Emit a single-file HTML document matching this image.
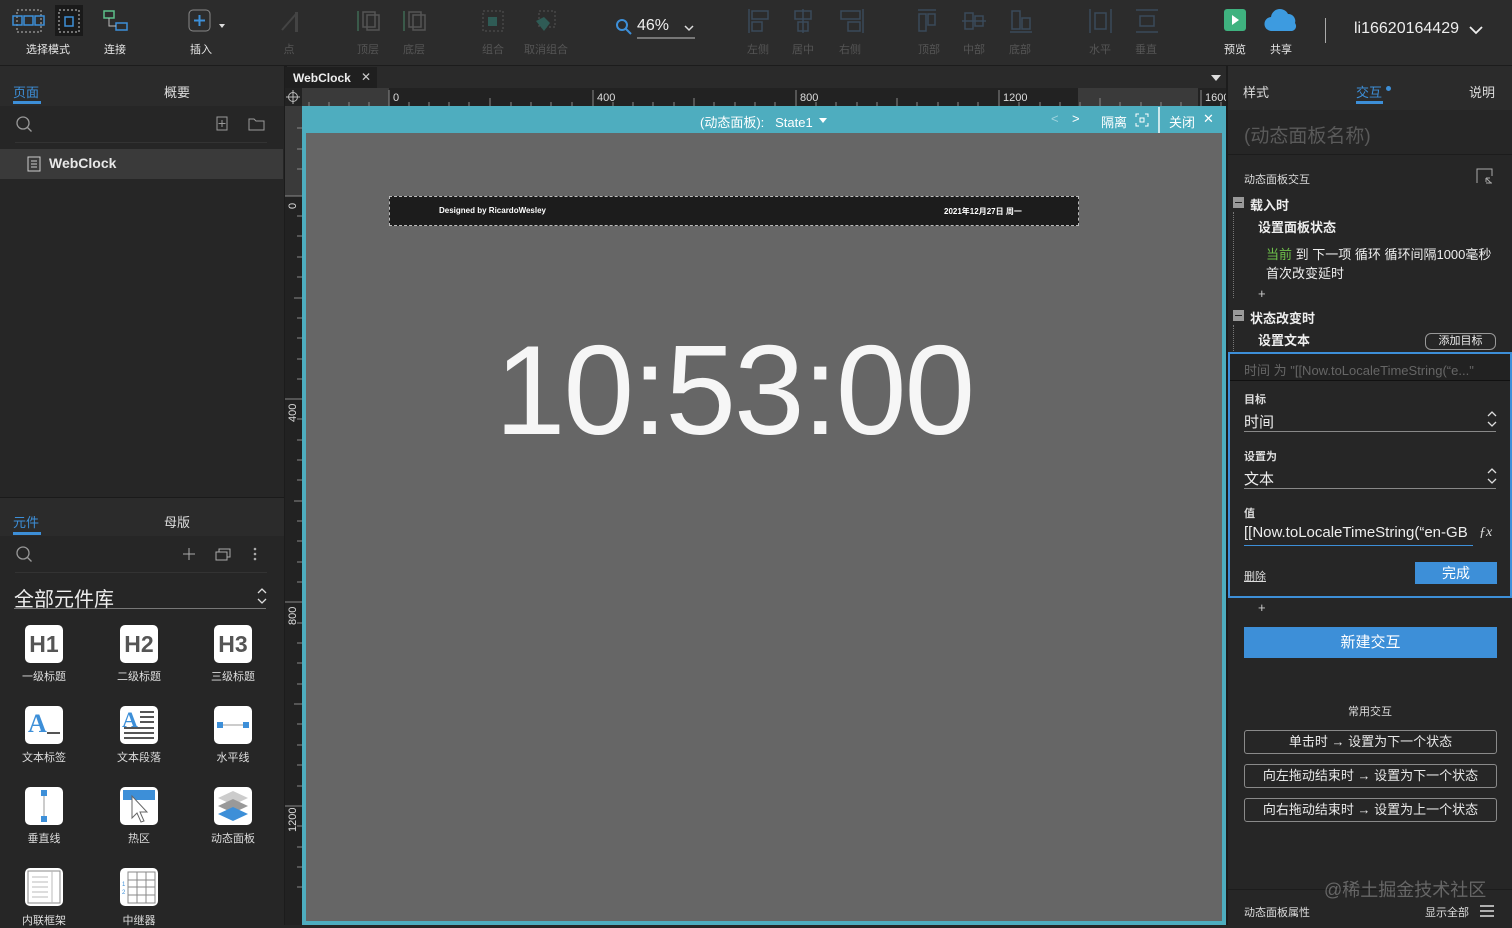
<!DOCTYPE html>
<html><head><meta charset="utf-8"><style>
*{margin:0;padding:0;box-sizing:border-box}
body{width:1512px;height:925px;background:#262626;font-family:"Liberation Sans","Noto Sans CJK SC",sans-serif;color:#ddd;position:relative;overflow:hidden;font-size:12px}
.a{position:absolute}
.tb{left:0;top:0;width:1512px;height:66px;background:#2c2c2c;border-bottom:1px solid #1c1c1c}
.tl{position:absolute;font-size:11px;color:#e6e6e6;text-align:center;width:60px}
.dim{color:#555}
.ic{position:absolute}
.tab{font-size:13px}
.blue{color:#3d8fd8}
.btn{position:absolute;left:1244px;width:253px;height:24px;border:1px solid #8a8a8a;border-radius:3px;font-size:13px;color:#e8e8e8;text-align:center;line-height:22px}
.comp{position:absolute;width:38px;height:38px;background:#fff;border-radius:5px;text-align:center}
.cl{position:absolute;font-size:11px;color:#ddd;width:90px;text-align:center}
</style></head><body>
<!-- toolbar -->
<div class="a tb"></div>
<svg class="ic" style="left:12px;top:8px" width="34" height="26"><rect x="5" y="2" width="24" height="22" fill="none" stroke="#bbb" stroke-dasharray="2,2"/><rect x="1" y="8" width="9" height="9" fill="none" stroke="#3d8fd8" stroke-width="1.5"/><rect x="12" y="8" width="9" height="9" fill="none" stroke="#3d8fd8" stroke-width="1.5"/><rect x="23" y="8" width="9" height="9" fill="none" stroke="#3d8fd8" stroke-width="1.5"/></svg>
<div class="a" style="left:55px;top:5px;width:28px;height:31px;background:#1a1a1a"></div>
<svg class="ic" style="left:57px;top:8px" width="24" height="26"><rect x="2" y="2" width="20" height="22" fill="none" stroke="#ccc" stroke-dasharray="2,2"/><rect x="8" y="9" width="8" height="9" fill="none" stroke="#3d8fd8" stroke-width="1.5"/></svg>
<div class="tl" style="left:18px;top:41px">选择模式</div>
<svg class="ic" style="left:103px;top:10px" width="26" height="22"><rect x="1" y="1" width="10" height="7" fill="none" stroke="#5cc08a" stroke-width="1.5"/><rect x="13" y="13" width="11" height="7" fill="none" stroke="#3d8fd8" stroke-width="1.5"/><path d="M6 8v8h7" fill="none" stroke="#bbb"/></svg>
<div class="tl" style="left:85px;top:41px">连接</div>
<svg class="ic" style="left:188px;top:9px" width="40" height="24"><rect x="1" y="1" width="21" height="21" rx="4" fill="none" stroke="#888"/><path d="M11.5 6v11M6 11.5h11" stroke="#3d8fd8" stroke-width="2"/><path d="M31 15l3 4 3-4z" fill="#ddd"/></svg>
<div class="tl" style="left:171px;top:41px">插入</div>
<svg class="ic" style="left:278px;top:10px" width="24" height="24"><path d="M4 20L18 4" stroke="#444" stroke-width="2"/><rect x="17" y="2" width="3" height="20" fill="#444"/></svg>
<div class="tl dim" style="left:259px;top:41px">点</div>
<svg class="ic" style="left:354px;top:9px" width="28" height="24"><path d="M4 22V2" stroke="#3a5a4a" stroke-width="2"/><rect x="9" y="3" width="12" height="15" fill="none" stroke="#555" stroke-width="1.5"/><rect x="13" y="6" width="12" height="15" fill="none" stroke="#555" stroke-width="1.5"/></svg>
<div class="tl dim" style="left:338px;top:41px">顶层</div>
<svg class="ic" style="left:400px;top:9px" width="28" height="24"><path d="M4 22V2" stroke="#3a5a4a" stroke-width="2"/><rect x="9" y="3" width="12" height="15" fill="none" stroke="#555" stroke-width="1.5"/><rect x="13" y="6" width="12" height="15" fill="none" stroke="#555" stroke-width="1.5"/></svg>
<div class="tl dim" style="left:384px;top:41px">底层</div>
<svg class="ic" style="left:481px;top:9px" width="24" height="24"><rect x="2" y="2" width="20" height="20" fill="none" stroke="#555" stroke-dasharray="2,2"/><rect x="7" y="8" width="9" height="9" fill="#2f5b55"/></svg>
<div class="tl dim" style="left:463px;top:41px">组合</div>
<svg class="ic" style="left:533px;top:9px" width="24" height="24"><rect x="6" y="2" width="16" height="16" fill="none" stroke="#555" stroke-dasharray="2,2"/><path d="M3 12l8 10 6-8-6-6z" fill="#2f5b55"/></svg>
<div class="tl dim" style="left:516px;top:41px">取消组合</div>
<svg class="ic" style="left:615px;top:18px" width="18" height="18"><circle cx="7" cy="7" r="5" fill="none" stroke="#3d8fd8" stroke-width="2"/><path d="M11 11l5 5" stroke="#3d8fd8" stroke-width="2"/></svg>
<div class="a" style="left:637px;top:17px;font-size:16px;color:#eee">46%</div>
<div class="a" style="left:637px;top:37px;width:58px;height:2px;background:#777"></div>
<svg class="ic" style="left:684px;top:25px" width="10" height="8"><path d="M1 1l4 4 4-4" stroke="#ddd" fill="none" stroke-width="1.5"/></svg>
<svg class="ic" style="left:744px;top:7px" width="430" height="28" fill="none" stroke="#3a4a5a" stroke-width="1.5">
<path d="M5 2v24"/><rect x="8" y="4" width="16" height="8"/><rect x="8" y="15" width="10" height="9"/>
<path d="M59 2v24"/><rect x="51" y="4" width="16" height="8"/><rect x="54" y="15" width="10" height="9"/>
<path d="M119 2v24"/><rect x="97" y="4" width="19" height="8"/><rect x="104" y="15" width="12" height="9"/>
<path d="M174 3h18"/><rect x="175" y="7" width="7" height="17"/><rect x="184" y="7" width="7" height="11"/>
<path d="M218 14h24"/><rect x="221" y="6" width="8" height="16"/><rect x="231" y="9" width="8" height="10"/>
<path d="M266 25h22"/><rect x="268" y="4" width="8" height="18"/><rect x="278" y="11" width="8" height="11"/>
<path d="M346 2v24M367 2v24"/><rect x="351" y="6" width="11" height="16"/>
<path d="M392 3h22M392 25h22"/><rect x="396" y="9" width="14" height="10"/></svg>
<div class="tl dim" style="left:728px;top:41px">左侧</div>
<div class="tl dim" style="left:773px;top:41px">居中</div>
<div class="tl dim" style="left:820px;top:41px">右侧</div>
<div class="tl dim" style="left:899px;top:41px">顶部</div>
<div class="tl dim" style="left:944px;top:41px">中部</div>
<div class="tl dim" style="left:990px;top:41px">底部</div>
<div class="tl dim" style="left:1070px;top:41px">水平</div>
<div class="tl dim" style="left:1116px;top:41px">垂直</div>
<div class="a" style="left:1224px;top:9px;width:22px;height:22px;background:#3fb27f;border-radius:3px"></div>
<svg class="ic" style="left:1231px;top:15px" width="10" height="10"><path d="M1 0l7 5-7 5z" fill="#fff"/></svg>
<div class="tl" style="left:1205px;top:41px">预览</div>
<svg class="ic" style="left:1264px;top:7px" width="36" height="26"><path d="M8 24a7 7 0 0 1-1-14 9 9 0 0 1 17-3 7 7 0 0 1 7 9 5 5 0 0 1-3 8z" fill="#3d9be0"/></svg>
<div class="tl" style="left:1251px;top:41px">共享</div>
<div class="a" style="left:1325px;top:18px;width:1px;height:25px;background:#aaa"></div>
<div class="a" style="left:1354px;top:20px;font-size:16px;color:#eee">li16620164429</div>
<svg class="ic" style="left:1469px;top:26px" width="14" height="10"><path d="M1 1l6 6 6-6" stroke="#eee" fill="none" stroke-width="1.8"/></svg>

<!-- left panel -->
<div class="a" style="left:0;top:66px;width:284px;height:40px;background:#2b2b2b"></div>
<div class="a tab blue" style="left:13px;top:82px">页面</div>
<div class="a" style="left:13px;top:101px;width:28px;height:3px;background:#3d8fd8"></div>
<div class="a tab" style="left:164px;top:82px">概要</div>
<svg class="ic" style="left:15px;top:115px" width="20" height="20"><circle cx="8" cy="8" r="6" fill="none" stroke="#999" stroke-width="1.3"/><path d="M12.5 12.5l4 4" stroke="#999" stroke-width="1.3"/></svg>
<svg class="ic" style="left:216px;top:116px" width="50" height="16"><rect x="1" y="1" width="10" height="13" fill="none" stroke="#999"/><path d="M6 4v7M2.5 7.5h7" stroke="#999"/><path d="M33 3h5l2 2h8v9H33z" fill="none" stroke="#999"/></svg>
<div class="a" style="left:15px;top:142px;width:252px;height:1px;background:#333"></div>
<div class="a" style="left:0;top:149px;width:283px;height:30px;background:#3a3a3a"></div>
<svg class="ic" style="left:27px;top:156px" width="14" height="16"><rect x="1" y="1" width="12" height="14" fill="none" stroke="#ccc"/><path d="M4 5h6M4 8h6M4 11h6" stroke="#ccc"/></svg>
<div class="a" style="left:49px;top:155px;font-size:14px;font-weight:bold;color:#e8e8e8">WebClock</div>
<div class="a" style="left:0;top:497px;width:284px;height:1px;background:#1a1a1a"></div>
<div class="a" style="left:0;top:498px;width:284px;height:38px;background:#2b2b2b"></div>
<div class="a tab blue" style="left:13px;top:512px">元件</div>
<div class="a" style="left:13px;top:532px;width:28px;height:3px;background:#3d8fd8"></div>
<div class="a tab" style="left:164px;top:512px">母版</div>
<svg class="ic" style="left:15px;top:545px" width="20" height="20"><circle cx="8" cy="8" r="6" fill="none" stroke="#999" stroke-width="1.3"/><path d="M12.5 12.5l4 4" stroke="#999" stroke-width="1.3"/></svg>
<svg class="ic" style="left:182px;top:546px" width="80" height="16"><path d="M7 2v12M1 8h12" stroke="#aaa"/><rect x="34" y="6" width="11" height="8" fill="none" stroke="#aaa"/><path d="M37 6V3h11v8h-3" fill="none" stroke="#aaa"/><circle cx="73" cy="3" r="1.3" fill="#aaa"/><circle cx="73" cy="8" r="1.3" fill="#aaa"/><circle cx="73" cy="13" r="1.3" fill="#aaa"/></svg>
<div class="a" style="left:15px;top:572px;width:252px;height:1px;background:#333"></div>
<div class="a" style="left:14px;top:583px;font-size:20px;color:#eee">全部元件库</div>
<div class="a" style="left:14px;top:608px;width:252px;height:1px;background:#777"></div>
<svg class="ic" style="left:257px;top:588px" width="10" height="16"><path d="M1 5l4-4 4 4M1 11l4 4 4-4" stroke="#ddd" fill="none" stroke-width="1.3"/></svg>
<div class="comp" style="left:25px;top:625px;font:bold 23px 'Liberation Sans';color:#555;line-height:38px">H1</div>
<div class="comp" style="left:120px;top:625px;font:bold 23px 'Liberation Sans';color:#555;line-height:38px">H2</div>
<div class="comp" style="left:214px;top:625px;font:bold 23px 'Liberation Sans';color:#555;line-height:38px">H3</div>
<div class="cl" style="left:-1px;top:668px">一级标题</div><div class="cl" style="left:94px;top:668px">二级标题</div><div class="cl" style="left:188px;top:668px">三级标题</div>
<div class="comp" style="left:25px;top:706px"><span style="position:absolute;left:3px;top:3px;font:bold 26px 'Liberation Serif';color:#3d8fd8">A</span><span style="position:absolute;left:22px;top:26px;width:13px;height:2px;background:#555"></span></div>
<div class="comp" style="left:120px;top:706px"><span style="position:absolute;left:2px;top:1px;font:bold 22px 'Liberation Serif';color:#3d8fd8">A</span><svg style="position:absolute;left:0;top:0" width="38" height="38"><path d="M20 6h14M20 11h14M20 16h14M4 22h30M4 27h30M4 32h30" stroke="#555" stroke-width="2"/></svg></div>
<div class="comp" style="left:214px;top:706px"><svg width="38" height="38"><path d="M6 19h26" stroke="#999"/><rect x="3" y="16" width="6" height="6" fill="#3d8fd8"/><rect x="29" y="16" width="6" height="6" fill="#3d8fd8"/></svg></div>
<div class="cl" style="left:-1px;top:749px">文本标签</div><div class="cl" style="left:94px;top:749px">文本段落</div><div class="cl" style="left:188px;top:749px">水平线</div>
<div class="comp" style="left:25px;top:787px"><svg width="38" height="38"><path d="M19 6v26" stroke="#999"/><rect x="16" y="3" width="6" height="6" fill="#3d8fd8"/><rect x="16" y="29" width="6" height="6" fill="#3d8fd8"/></svg></div>
<div class="comp" style="left:120px;top:787px"><svg width="38" height="38"><rect x="3" y="3" width="32" height="10" fill="#3d8fd8"/><path d="M12 9v22l5-5 4 9 3-1-4-9h7z" fill="#fff" stroke="#666"/></svg></div>
<div class="comp" style="left:214px;top:787px"><svg width="38" height="38"><path d="M19 4l15 7-15 7-15-7z" fill="#ccc"/><path d="M19 12l15 7-15 7-15-7z" fill="#999"/><path d="M19 20l15 7-15 7-15-7z" fill="#3d8fd8"/></svg></div>
<div class="cl" style="left:-1px;top:830px">垂直线</div><div class="cl" style="left:94px;top:830px">热区</div><div class="cl" style="left:188px;top:830px">动态面板</div>
<div class="comp" style="left:25px;top:868px"><svg width="38" height="38"><rect x="3" y="3" width="32" height="32" fill="none" stroke="#888"/><path d="M27 3v32M7 9h16M7 14h16M7 19h16M7 24h16M7 29h16" stroke="#bbb"/></svg></div>
<div class="comp" style="left:120px;top:868px"><svg width="38" height="38"><path d="M8 4h27v31H8zM8 12h27M8 19h27M8 27h27M17 4v31M26 4v31" fill="none" stroke="#888"/><text x="2" y="18" font-size="6" fill="#3d8fd8">1</text><text x="2" y="26" font-size="6" fill="#3d8fd8">2</text></svg></div>
<div class="cl" style="left:-1px;top:912px">内联框架</div><div class="cl" style="left:94px;top:912px">中继器</div>

<!-- center -->
<div class="a" style="left:284px;top:66px;width:3px;height:859px;background:#1c1c1c"></div>
<div class="a" style="left:287px;top:66px;width:941px;height:22px;background:#2a2a2a"></div>
<div class="a" style="left:285px;top:67px;width:92px;height:21px;background:#1f1f1f"></div>
<div class="a" style="left:293px;top:71px;font-size:12px;font-weight:bold;color:#eee">WebClock</div>
<div class="a" style="left:361px;top:70px;font-size:12px;color:#ccc">✕</div>
<svg class="ic" style="left:1210px;top:74px" width="12" height="8"><path d="M1 1h10l-5 6z" fill="#ddd"/></svg>
<div class="a" style="left:285px;top:88px;width:943px;height:18px;background:#222"></div>
<div class="a" style="left:302px;top:88px;width:87px;height:18px;background:#3a3a3a"></div>
<div class="a" style="left:1078px;top:88px;width:120px;height:18px;background:#3a3a3a"></div>
<svg class="ic" style="left:302px;top:88px" width="926" height="18">
<g stroke="#888">
<path d="M87 2v16M291 2v16M494 2v16M697 2v16M899 2v16"/>
<path d="M7 14v4M27 14v4M47 14v4M67 14v4M107 14v4M127 14v4M147 14v4M167 14v4M188 10v8M209 14v4M229 14v4M249 14v4M270 14v4M311 14v4M331 14v4M351 14v4M372 14v4M392 10v8M412 14v4M433 14v4M453 14v4M473 14v4M514 14v4M534 14v4M555 14v4M575 14v4M595 10v8M615 14v4M636 14v4M656 14v4M676 14v4M717 14v4M738 14v4M758 14v4M778 14v4M798 10v8M818 14v4M839 14v4M859 14v4M879 14v4M919 14v4"/></g>
<g fill="#ddd" font-size="11" font-family="Liberation Sans"><text x="91" y="13">0</text><text x="295" y="13">400</text><text x="498" y="13">800</text><text x="701" y="13">1200</text><text x="903" y="13">1600</text></g></svg>
<svg class="ic" style="left:286px;top:90px" width="14" height="14"><circle cx="7" cy="7" r="4.5" fill="none" stroke="#bbb"/><path d="M7 0v14M0 7h14" stroke="#bbb"/></svg>
<div class="a" style="left:285px;top:106px;width:17px;height:819px;background:#222"></div>
<div class="a" style="left:285px;top:106px;width:17px;height:90px;background:#3a3a3a"></div>
<svg class="ic" style="left:285px;top:106px" width="17" height="819"><g stroke="#888"><path d="M0 90h17M0 293h17M0 496h17M0 700h17M12 22h5M12 43h5M12 63h5M12 110h5M12 130h5M12 151h5M12 171h5M9 192h8M12 212h5M12 232h5M12 253h5M12 273h5M12 313h5M12 334h5M12 354h5M12 374h5M9 395h8M12 415h5M12 435h5M12 456h5M12 476h5M12 517h5M12 537h5M12 557h5M12 578h5M9 598h8M12 618h5M12 639h5M12 659h5M12 680h5M12 720h5M12 741h5M12 761h5M12 781h5"/></g>
<g fill="#ddd" font-size="11" font-family="Liberation Sans"><text transform="translate(11,103) rotate(-90)">0</text><text transform="translate(11,316) rotate(-90)">400</text><text transform="translate(11,519) rotate(-90)">800</text><text transform="translate(11,726) rotate(-90)">1200</text></g></svg>
<div class="a" style="left:302px;top:106px;width:924px;height:819px;background:#4eadbf"></div>
<div class="a" style="left:306px;top:133px;width:916px;height:788px;background:#666"></div>
<div class="a" style="left:700px;top:112px;font-size:13px;color:#fff">(动态面板):&nbsp;&nbsp; State1</div>
<svg class="ic" style="left:819px;top:118px" width="8" height="6"><path d="M0 0h8l-4 5z" fill="#fff"/></svg>
<div class="a" style="left:1051px;top:111px;font-size:13px;color:#9fd4de">&lt;</div>
<div class="a" style="left:1072px;top:111px;font-size:13px;color:#fff">&gt;</div>
<div class="a" style="left:1101px;top:112px;font-size:13px;color:#fff">隔离</div>
<svg class="ic" style="left:1135px;top:113px" width="14" height="14"><path d="M1 4V1h3M10 1h3v3M13 10v3h-3M4 13H1v-3" stroke="#fff" fill="none"/><rect x="5" y="5" width="4" height="4" fill="none" stroke="#fff"/></svg>
<div class="a" style="left:1158px;top:107px;width:2px;height:26px;background:#fff;opacity:.7"></div>
<div class="a" style="left:1169px;top:112px;font-size:13px;color:#fff">关闭</div>
<div class="a" style="left:1203px;top:111px;font-size:13px;color:#fff">✕</div>
<div class="a" style="left:389px;top:196px;width:690px;height:30px;background:#1c1c1c;border:1px dashed #bbb"></div>
<div class="a" style="left:439px;top:206px;font-size:8px;font-weight:bold;color:#fff">Designed by RicardoWesley</div>
<div class="a" style="left:944px;top:206px;font-size:8px;font-weight:bold;color:#fff">2021年12月27日 周一</div>
<div class="a" style="left:484px;top:315px;width:500px;font-size:127px;line-height:150px;color:#f6f6f6;letter-spacing:-2px;text-align:center">10:53:00</div>

<!-- right panel -->
<div class="a" style="left:1226px;top:66px;width:2px;height:859px;background:#1c1c1c"></div>
<div class="a" style="left:1228px;top:66px;width:284px;height:44px;background:#2b2b2b"></div>
<div class="a tab" style="left:1243px;top:82px">样式</div>
<div class="a tab blue" style="left:1356px;top:82px">交互</div>
<div class="a" style="left:1386px;top:86px;width:5px;height:5px;border-radius:50%;background:#3d8fd8"></div>
<div class="a" style="left:1356px;top:101px;width:27px;height:3px;background:#3d8fd8"></div>
<div class="a tab" style="left:1469px;top:82px">说明</div>
<div class="a" style="left:1244px;top:121px;font-size:19px;color:#5a5a5a">(动态面板名称)</div>
<div class="a" style="left:1228px;top:154px;width:284px;height:1px;background:#1c1c1c"></div>
<div class="a" style="left:1244px;top:171px;font-size:11px;color:#ddd">动态面板交互</div>
<svg class="ic" style="left:1476px;top:168px" width="18" height="18"><path d="M1 15V1h15v7M16 15H10" stroke="#aaa" fill="none"/><path d="M10 10l5 5M10 10h4M10 10v4" stroke="#aaa"/></svg>
<div class="a" style="left:1233px;top:197px;width:11px;height:11px;background:#999"></div><div class="a" style="left:1235px;top:202px;width:7px;height:1px;background:#222"></div>
<div class="a" style="left:1250px;top:195px;font-size:13px;font-weight:bold;color:#eee">载入时</div>
<div class="a" style="left:1233px;top:212px;height:86px;border-left:1px dotted #777"></div>
<div class="a" style="left:1258px;top:217px;font-size:13px;font-weight:bold;color:#eee">设置面板状态</div>
<div class="a" style="left:1266px;top:245px;font-size:13px;color:#eee;line-height:19px"><span style="color:#6ec04a">当前</span> 到 下一项 循环 循环间隔1000毫秒<br>首次改变延时</div>
<div class="a" style="left:1258px;top:286px;font-size:13px;color:#ccc">+</div>
<div class="a" style="left:1233px;top:310px;width:11px;height:11px;background:#999"></div><div class="a" style="left:1235px;top:315px;width:7px;height:1px;background:#222"></div>
<div class="a" style="left:1250px;top:308px;font-size:13px;font-weight:bold;color:#eee">状态改变时</div>
<div class="a" style="left:1233px;top:325px;height:26px;border-left:1px dotted #777"></div>
<div class="a" style="left:1258px;top:330px;font-size:13px;font-weight:bold;color:#eee">设置文本</div>
<div class="a" style="left:1425px;top:333px;width:71px;height:17px;border:1px solid #999;border-radius:6px;font-size:11px;color:#eee;text-align:center;line-height:15px">添加目标</div>
<div class="a" style="left:1228px;top:352px;width:284px;height:246px;border:2px solid #3d8fd8"></div>
<div class="a" style="left:1230px;top:354px;width:280px;height:26px;background:#222"></div>
<div class="a" style="left:1244px;top:360px;font-size:13px;color:#666">时间 为 "[[Now.toLocaleTimeString(“e..."</div>
<div class="a" style="left:1230px;top:380px;width:280px;height:1px;background:#111"></div>
<div class="a" style="left:1244px;top:391px;font-size:11px;font-weight:bold;color:#ddd">目标</div>
<div class="a" style="left:1244px;top:411px;font-size:15px;color:#eee">时间</div>
<div class="a" style="left:1244px;top:431px;width:252px;height:1px;background:#888"></div>
<svg class="ic" style="left:1487px;top:411px" width="10" height="16"><path d="M1 5l4-4 4 4M1 11l4 4 4-4" stroke="#ddd" fill="none" stroke-width="1.3"/></svg>
<div class="a" style="left:1244px;top:448px;font-size:11px;font-weight:bold;color:#ddd">设置为</div>
<div class="a" style="left:1244px;top:468px;font-size:15px;color:#eee">文本</div>
<div class="a" style="left:1244px;top:488px;width:252px;height:1px;background:#888"></div>
<svg class="ic" style="left:1487px;top:468px" width="10" height="16"><path d="M1 5l4-4 4 4M1 11l4 4 4-4" stroke="#ddd" fill="none" stroke-width="1.3"/></svg>
<div class="a" style="left:1244px;top:505px;font-size:11px;font-weight:bold;color:#ddd">值</div>
<div class="a" style="left:1244px;top:524px;width:229px;overflow:hidden;white-space:nowrap;font-size:15px;color:#eee">[[Now.toLocaleTimeString(“en-GB</div>
<div class="a" style="left:1244px;top:545px;width:229px;height:1px;background:#3d8fd8"></div>
<div class="a" style="left:1479px;top:525px;font-size:14px;font-style:italic;font-family:'Liberation Serif';color:#ddd">ƒx</div>
<div class="a" style="left:1244px;top:568px;font-size:11px;color:#ddd;text-decoration:underline">删除</div>
<div class="a" style="left:1415px;top:562px;width:82px;height:22px;background:#3d8fd8;color:#fff;font-size:14px;text-align:center;line-height:22px">完成</div>
<div class="a" style="left:1258px;top:600px;font-size:13px;color:#ccc">+</div>
<div class="a" style="left:1244px;top:627px;width:253px;height:31px;background:#3d8fd8;color:#fff;font-size:15px;text-align:center;line-height:31px">新建交互</div>
<div class="a" style="left:1348px;top:703px;font-size:11px;color:#ddd">常用交互</div>
<div class="btn" style="top:730px">单击时 → 设置为下一个状态</div>
<div class="btn" style="top:764px">向左拖动结束时 → 设置为下一个状态</div>
<div class="btn" style="top:798px">向右拖动结束时 → 设置为上一个状态</div>
<div class="a" style="left:1228px;top:889px;width:284px;height:1px;background:#1c1c1c"></div>
<div class="a" style="left:1324px;top:876px;font-size:18px;color:#777;opacity:.8">@稀土掘金技术社区</div>
<div class="a" style="left:1244px;top:904px;font-size:11px;color:#ddd">动态面板属性</div>
<div class="a" style="left:1425px;top:904px;font-size:11px;color:#ddd">显示全部</div>
<svg class="ic" style="left:1480px;top:905px" width="14" height="12"><path d="M0 1h14M0 6h14M0 11h14" stroke="#ddd" stroke-width="1.5"/></svg>
</body></html>
